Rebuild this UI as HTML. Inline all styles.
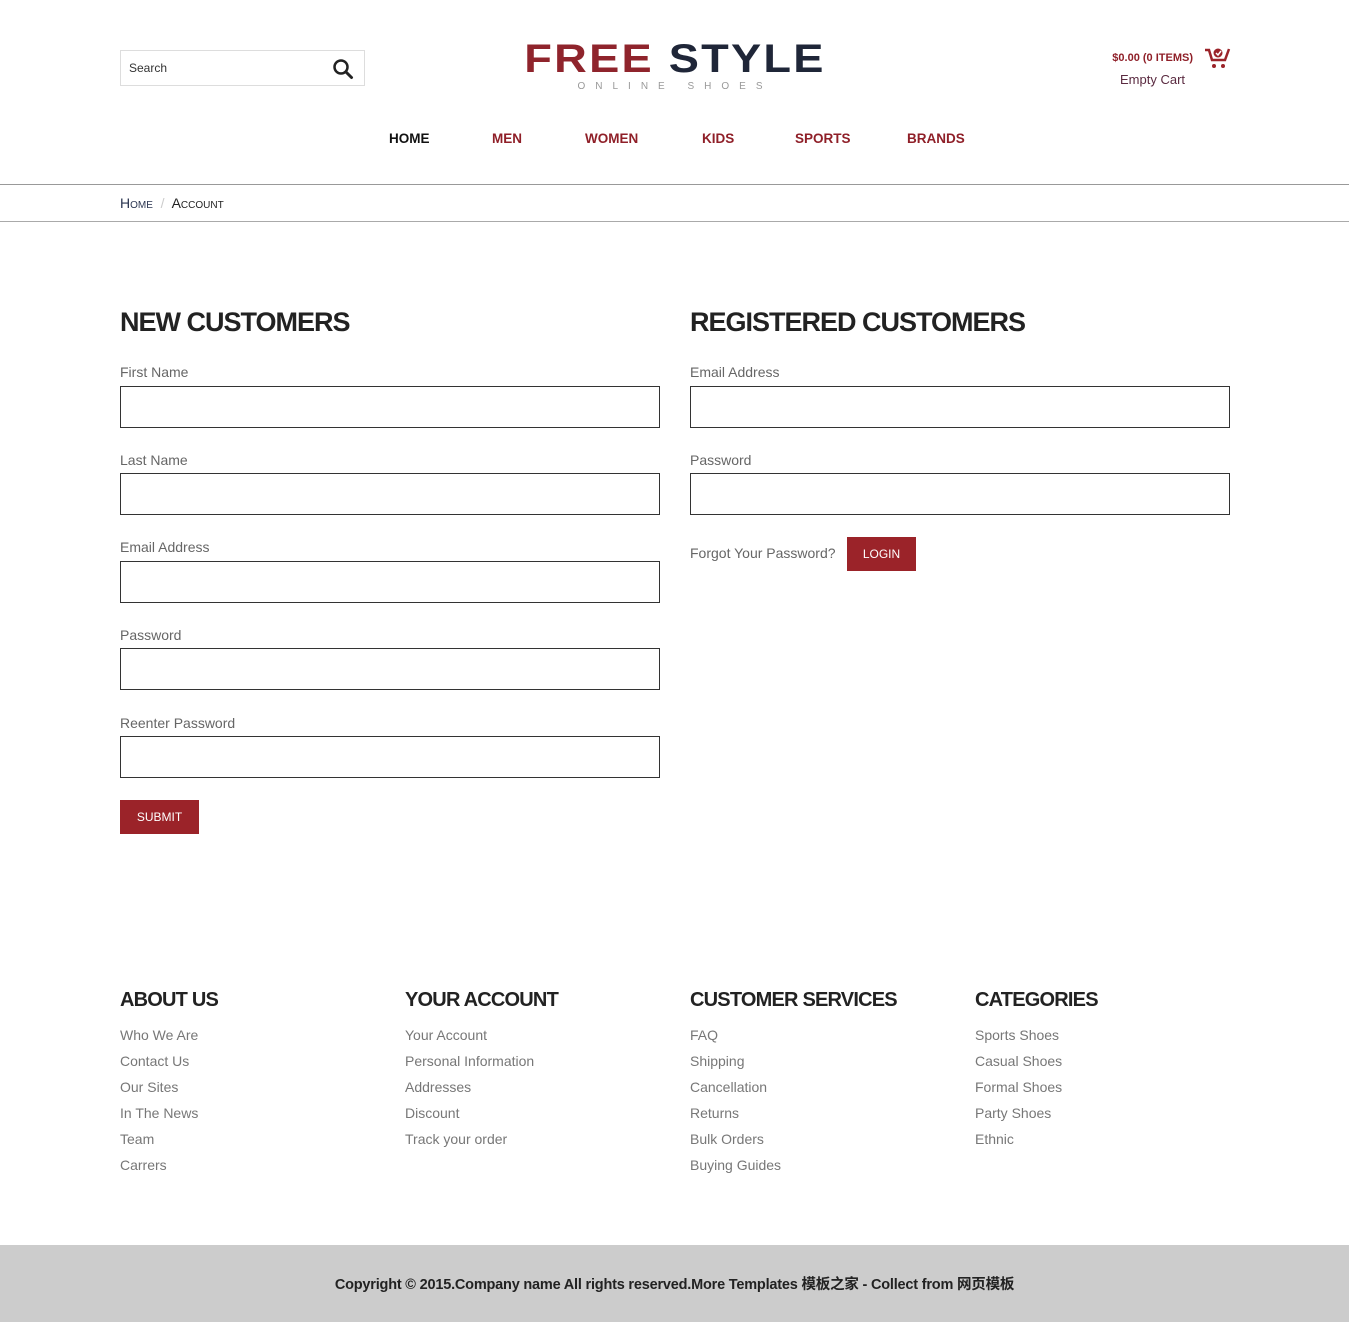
<!DOCTYPE html>
<html><head><meta charset="utf-8"><style>
*{box-sizing:border-box;margin:0;padding:0}
body{width:1349px;height:1322px;background:#fff;font-family:"Liberation Sans","Noto Sans CJK SC",sans-serif;color:#666;position:relative;overflow:hidden}
.a{position:absolute}
.search{left:120px;top:50px;width:245px;height:36px;border:1px solid #ddd;font-size:12px;color:#333;padding:10px 8px}
.logo{left:475px;top:37px;width:400px;text-align:center;font-weight:bold;font-size:40px;letter-spacing:2px;line-height:44px;transform:scaleX(1.13)}
.sub{left:500px;top:81px;width:350px;text-align:center;font-size:10px;letter-spacing:10px;color:#999}
.nav{top:131px;font-size:13.5px;font-weight:bold;color:#8f1f28}
.hr{left:0;width:1349px;height:1px;background:#999}
h2{position:absolute;font-size:27px;color:#222;font-weight:bold;letter-spacing:-1px}
.lab{position:absolute;font-size:14px;color:#666}
.inp{position:absolute;width:540px;height:42px;border:1px solid #333}
.btn{position:absolute;background:#9b2329;color:#fff;font-size:12px;text-align:center}
h3{position:absolute;font-size:20px;color:#222;font-weight:bold;letter-spacing:-0.8px;top:989px}
ul{position:absolute;top:1022px;list-style:none;font-size:14px;line-height:26px;color:#777}
</style></head><body>
<div class="a search">Search
<svg class="a" style="left:211px;top:7px" width="22" height="22" viewBox="0 0 22 22"><circle cx="9" cy="9" r="6.5" fill="none" stroke="#222" stroke-width="2.5"/><line x1="14" y1="14" x2="19.5" y2="19.5" stroke="#222" stroke-width="3" stroke-linecap="round"/></svg></div>
<div class="a logo"><span style="color:#8f242c">FREE</span> <span style="color:#1f2638">STYLE</span></div>
<div class="a sub">ONLINE SHOES</div>
<div class="a" style="left:1100px;top:52px;width:93px;text-align:right;font-size:11px;font-weight:bold;color:#8f1f28">$0.00 (0 ITEMS)</div>
<div class="a" style="left:1120px;top:72px;font-size:13px;color:#5a2a40">Empty Cart</div>
<svg class="a" style="left:1204px;top:47px" width="28" height="24" viewBox="0 0 28 24"><path d="M1 3h4l3 10h13l4-11" fill="none" stroke="#9b2329" stroke-width="2.5"/><circle cx="14" cy="6" r="4.5" fill="#9b2329"/><path d="M12 6l2 2 3-4" stroke="#fff" stroke-width="1.5" fill="none"/><circle cx="10" cy="19" r="2" fill="#9b2329"/><circle cx="19" cy="19" r="2" fill="#9b2329"/></svg>
<div class="a nav" style="left:389px;color:#111">HOME</div>
<div class="a nav" style="left:492px">MEN</div>
<div class="a nav" style="left:585px">WOMEN</div>
<div class="a nav" style="left:702px">KIDS</div>
<div class="a nav" style="left:795px">SPORTS</div>
<div class="a nav" style="left:907px">BRANDS</div>
<div class="a hr" style="top:184px"></div>
<div class="a" style="left:120px;top:195px;color:#2a3550;font-variant:small-caps;font-size:14px">Home <span style="color:#ccc">&nbsp;/&nbsp;</span> <span style="color:#222">Account</span></div>
<div class="a hr" style="top:221px;background:#aaa"></div>
<h2 style="left:120px;top:307px">NEW CUSTOMERS</h2>
<h2 style="left:690px;top:307px">REGISTERED CUSTOMERS</h2>
<div class="lab" style="left:120px;top:364px">First Name</div><div class="inp" style="left:120px;top:386px"></div>
<div class="lab" style="left:120px;top:452px">Last Name</div><div class="inp" style="left:120px;top:473px"></div>
<div class="lab" style="left:120px;top:539px">Email Address</div><div class="inp" style="left:120px;top:561px"></div>
<div class="lab" style="left:120px;top:627px">Password</div><div class="inp" style="left:120px;top:648px"></div>
<div class="lab" style="left:120px;top:715px">Reenter Password</div><div class="inp" style="left:120px;top:736px"></div>
<div class="btn" style="left:120px;top:800px;width:79px;height:34px;line-height:34px">SUBMIT</div>
<div class="lab" style="left:690px;top:364px">Email Address</div><div class="inp" style="left:690px;top:386px"></div>
<div class="lab" style="left:690px;top:452px">Password</div><div class="inp" style="left:690px;top:473px"></div>
<div class="lab" style="left:690px;top:545px">Forgot Your Password?</div>
<div class="btn" style="left:847px;top:537px;width:69px;height:34px;line-height:34px">LOGIN</div>
<h3 style="left:120px">ABOUT US</h3>
<h3 style="left:405px">YOUR ACCOUNT</h3>
<h3 style="left:690px">CUSTOMER SERVICES</h3>
<h3 style="left:975px">CATEGORIES</h3>
<ul style="left:120px"><li>Who We Are</li><li>Contact Us</li><li>Our Sites</li><li>In The News</li><li>Team</li><li>Carrers</li></ul>
<ul style="left:405px"><li>Your Account</li><li>Personal Information</li><li>Addresses</li><li>Discount</li><li>Track your order</li></ul>
<ul style="left:690px"><li>FAQ</li><li>Shipping</li><li>Cancellation</li><li>Returns</li><li>Bulk Orders</li><li>Buying Guides</li></ul>
<ul style="left:975px"><li>Sports Shoes</li><li>Casual Shoes</li><li>Formal Shoes</li><li>Party Shoes</li><li>Ethnic</li></ul>
<div class="a" style="left:0;top:1245px;width:1349px;height:77px;background:#ccc;text-align:center;line-height:80px;font-size:14.5px;font-weight:bold;color:#222;letter-spacing:-0.2px">Copyright © 2015.Company name All rights reserved.More Templates 模板之家 - Collect from 网页模板</div>
</body></html>
